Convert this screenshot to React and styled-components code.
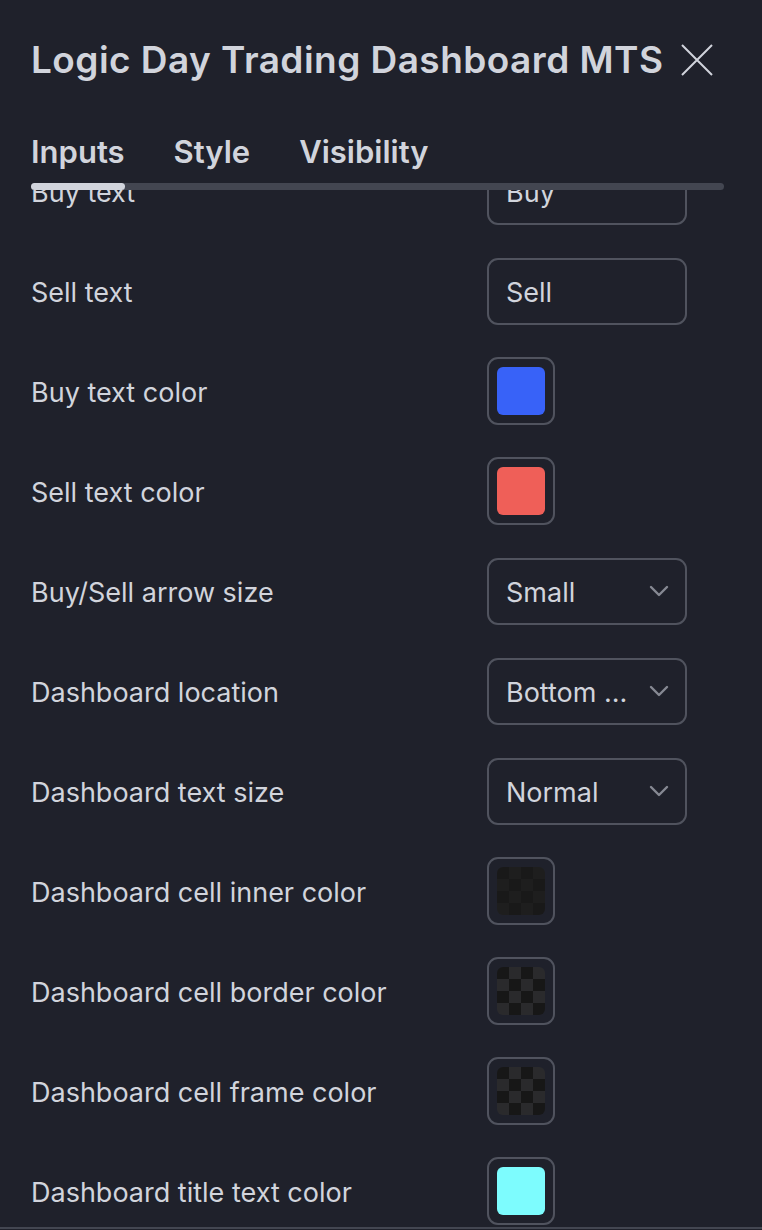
import React from 'react'
import styled, { createGlobalStyle } from 'styled-components'

const GlobalStyle = createGlobalStyle`
  html, body {
    margin: 0;
    padding: 0;
    background: #1f212b;
  }
  body {
    font-family: Inter, "Noto Sans", "Liberation Sans", sans-serif;
    color: #d1d4dc;
  }
`

const Dialog = styled.div`
  width: 762px;
  height: 1230px;
  background: #1f212b;
  display: flex;
  flex-direction: column;
  overflow: hidden;
`

const Header = styled.div`
  display: flex;
  align-items: center;
  justify-content: space-between;
  padding: 38px 48px 0 31px;
  height: 44px;
`

const Title = styled.h1`
  margin: 0;
  font-size: 37px;
  line-height: 44px;
  font-weight: 600;
  letter-spacing: 0.45px;
  color: #d1d4dc;
  white-space: nowrap;
`

const CloseButton = styled.button`
  width: 34px;
  height: 34px;
  padding: 0;
  border: none;
  background: none;
  color: #d1d4dc;
  display: flex;
  align-items: center;
  justify-content: center;
`

const Tabs = styled.div`
  display: flex;
  gap: 49px;
  padding: 0 31px;
  margin-top: 50px;
`

const Tab = styled.div`
  font-size: 31px;
  line-height: 40px;
  font-weight: 600;
  color: #d1d4dc;
`

const Track = styled.div`
  margin: 11px 38px 0 31px;
  height: 7px;
  border-radius: 4px;
  background: #434651;
  display: flex;
`

const Thumb = styled.div`
  width: 94px;
  height: 100%;
  border-radius: 4px;
  background: #d1d4dc;
`

const Scroller = styled.div`
  flex: 1;
  overflow: hidden;
  border-bottom: 2px solid #434651;
  margin-bottom: 1px;
`

const List = styled.div`
  margin-top: -49px;
  padding: 0 31px;
`

const Row = styled.div`
  height: 100px;
  display: flex;
  align-items: center;
`

const Label = styled.div`
  width: 456px;
  padding-top: 4px;
  font-size: 27px;
  line-height: 32px;
  color: #d1d4dc;
`

const Field = styled.div`
  box-sizing: border-box;
  width: 200px;
  height: 67px;
  border: 2px solid #50535e;
  border-radius: 11px;
  display: flex;
  align-items: center;
  justify-content: space-between;
  padding: 3px 16px 0 17px;
  font-size: 27px;
  color: #d1d4dc;
`

const SwatchBox = styled.div`
  box-sizing: border-box;
  width: 68px;
  height: 68px;
  border: 2px solid #50535e;
  border-radius: 11px;
  display: flex;
  align-items: center;
  justify-content: center;
`

const Swatch = styled.div`
  width: 48px;
  height: 48px;
  border-radius: 6px;
  background: ${({ color }) => color};
`

const Checker = styled.div`
  width: 48px;
  height: 48px;
  border-radius: 6px;
  background: repeating-conic-gradient(
      ${({ a }) => a} 0% 25%,
      ${({ b }) => b} 0% 50%
    )
    0 0 / 24px 24px;
`

const ChevronIcon = styled.svg`
  margin-top: -3px;
`

const Chevron = () => (
  <ChevronIcon width="20" height="12" viewBox="0 0 20 12" fill="none">
    <path d="M2 2l8 8 8-8" stroke="#868993" strokeWidth="2.4" strokeLinecap="round" strokeLinejoin="round" />
  </ChevronIcon>
)

const rows = [
  { label: 'Buy text', type: 'text', value: 'Buy' },
  { label: 'Sell text', type: 'text', value: 'Sell' },
  { label: 'Buy text color', type: 'color', color: '#3862f8' },
  { label: 'Sell text color', type: 'color', color: '#ef5f58' },
  { label: 'Buy/Sell arrow size', type: 'select', value: 'Small' },
  { label: 'Dashboard location', type: 'select', value: 'Bottom ...' },
  { label: 'Dashboard text size', type: 'select', value: 'Normal' },
  { label: 'Dashboard cell inner color', type: 'checker', a: '#1e1e1e', b: '#191919' },
  { label: 'Dashboard cell border color', type: 'checker', a: '#2a2a2c', b: '#171717' },
  { label: 'Dashboard cell frame color', type: 'checker', a: '#2a2a2c', b: '#171717' },
  { label: 'Dashboard title text color', type: 'color', color: '#7dfcfe' },
]

const Control = ({ row }) => {
  if (row.type === 'text') return <Field>{row.value}</Field>
  if (row.type === 'select')
    return (
      <Field>
        <span>{row.value}</span>
        <Chevron />
      </Field>
    )
  if (row.type === 'checker')
    return (
      <SwatchBox>
        <Checker a={row.a} b={row.b} />
      </SwatchBox>
    )
  return (
    <SwatchBox>
      <Swatch color={row.color} />
    </SwatchBox>
  )
}

export default function App() {
  return (
    <>
      <GlobalStyle />
      <Dialog>
        <Header>
          <Title>Logic Day Trading Dashboard MTS</Title>
          <CloseButton>
            <svg width="34" height="34" viewBox="0 0 34 34" fill="none">
              <path d="M2 2l30 30M32 2L2 32" stroke="#d1d4dc" strokeWidth="2" />
            </svg>
          </CloseButton>
        </Header>
        <Tabs>
          <Tab>Inputs</Tab>
          <Tab>Style</Tab>
          <Tab>Visibility</Tab>
        </Tabs>
        <Track>
          <Thumb />
        </Track>
        <Scroller>
          <List>
            {rows.map((row) => (
              <Row key={row.label}>
                <Label>{row.label}</Label>
                <Control row={row} />
              </Row>
            ))}
          </List>
        </Scroller>
      </Dialog>
    </>
  )
}
